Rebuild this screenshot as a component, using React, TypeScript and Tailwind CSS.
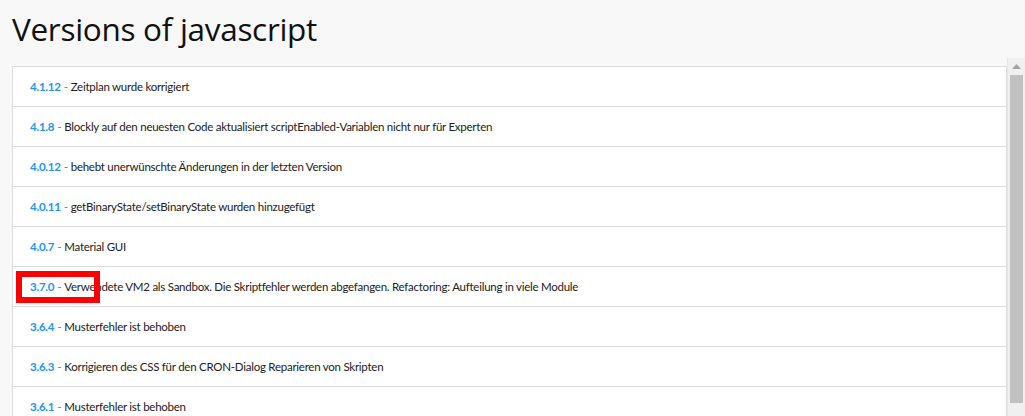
const versions = [
  { v: "4.1.12", text: "Zeitplan wurde korrigiert" },
  { v: "4.1.8", text: "Blockly auf den neuesten Code aktualisiert scriptEnabled-Variablen nicht nur für Experten" },
  { v: "4.0.12", text: "behebt unerwünschte Änderungen in der letzten Version" },
  { v: "4.0.11", text: "getBinaryState/setBinaryState wurden hinzugefügt" },
  { v: "4.0.7", text: "Material GUI" },
  { v: "3.7.0", text: "Verwendete VM2 als Sandbox. Die Skriptfehler werden abgefangen. Refactoring: Aufteilung in viele Module" },
  { v: "3.6.4", text: "Musterfehler ist behoben" },
  { v: "3.6.3", text: "Korrigieren des CSS für den CRON-Dialog Reparieren von Skripten" },
  { v: "3.6.1", text: "Musterfehler ist behoben" },
];

export default function App() {
  return (
    <div
      className="h-[416px] w-[1025px] overflow-hidden bg-[#f8f8f8] text-[#212121]"
      style={{ fontFamily: "'Open Sans', 'Noto Sans', sans-serif" }}
    >
      <h1 className="h-[58px] pl-3 pt-[7px] text-[31.5px] leading-[44px] font-normal tracking-[-0.3px] text-[#111]">
        Versions of javascript
      </h1>

      <div className="flex h-[358px]">
        <div className="relative ml-3 mt-2 flex-1">
          <ul className="border-x border-b border-[#dddddd] bg-white">
            {versions.map((item) => (
              <li
                key={item.v}
                className="flex h-10 items-center border-t border-[#dddddd] pl-[17px] text-[11.5px] tracking-[-0.25px]"
                style={{ fontFamily: "Lato, sans-serif" }}
              >
                <span className="font-bold text-[#2196f3]">{item.v}</span>
                <span className="mx-[3px] text-[#2196f3]">-</span>
                <span>{item.text}</span>
              </li>
            ))}
          </ul>
          {/* highlight box drawn over the 3.7.0 row */}
          <div className="absolute left-[4px] top-[205px] h-[32px] w-[84px] border-[6px] border-[#ff0000]" />
        </div>

        <div className="flex w-[18px] flex-col items-center border-l border-[#e6e6e6] bg-[#f0f0f0]">
          <svg width="9" height="5" viewBox="0 0 9 5" className="mt-[6px]">
            <path d="M4.5 0 L9 5 L0 5 Z" fill="#a3a3a3" />
          </svg>
          <div className="mt-[6px] h-[328px] w-[13px] bg-[#c1c1c1]" />
        </div>
      </div>
    </div>
  );
}
